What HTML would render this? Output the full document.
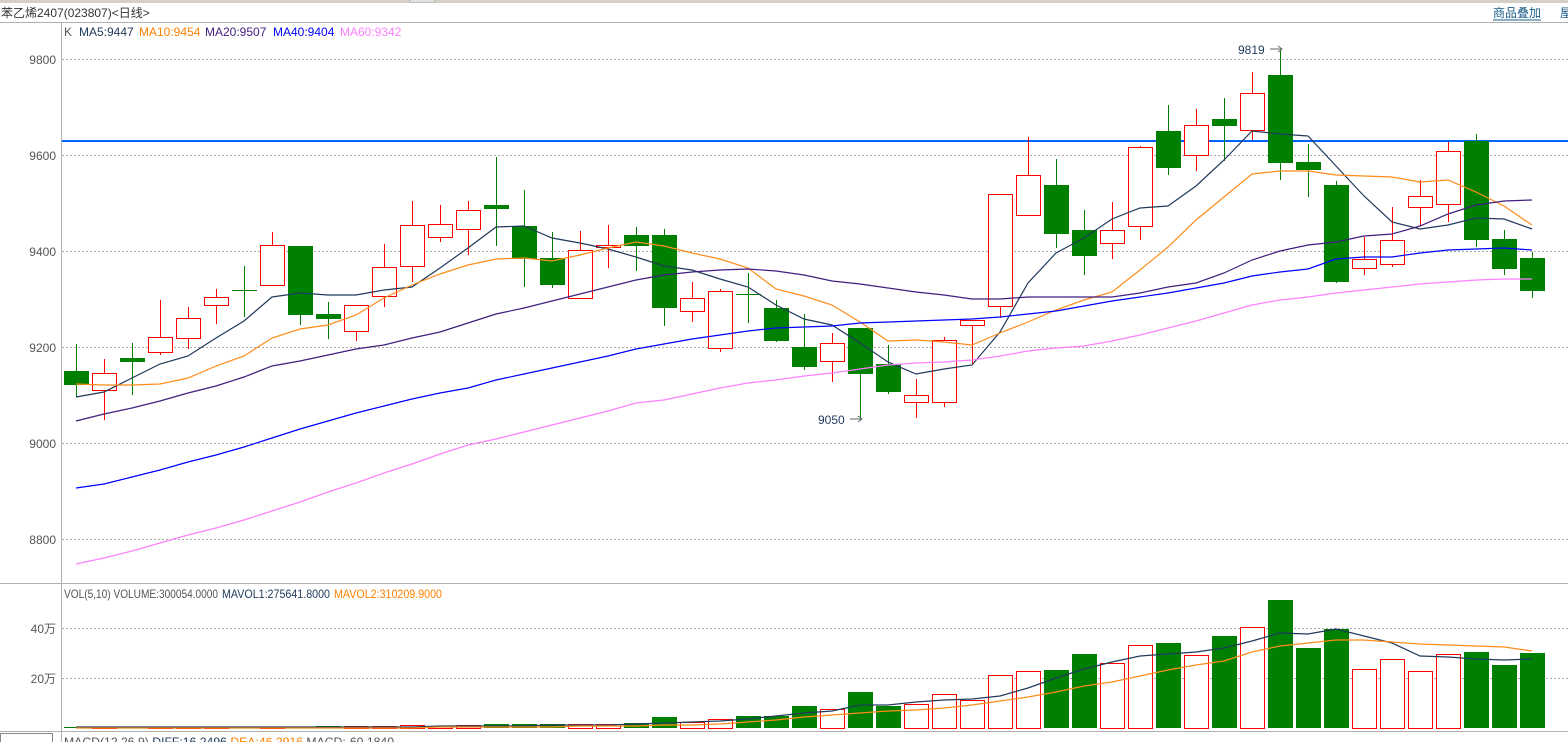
<!DOCTYPE html>
<html><head><meta charset="utf-8"><style>
body{margin:0;width:1568px;height:742px;overflow:hidden;background:#fff;font-family:"Liberation Sans","Noto Sans CJK SC",sans-serif;}
svg{position:absolute;left:0;top:0}
text{font-family:"Liberation Sans","Noto Sans CJK SC",sans-serif;font-size:12px}
</style></head><body>
<svg id="s" width="1568" height="742" xmlns="http://www.w3.org/2000/svg">
<rect x="0" y="0" width="1568" height="3" fill="#d4d0c8"/>
<rect x="410" y="0" width="25" height="2" fill="#fff" stroke="#888" stroke-width="0.5"/>
<text x="1" y="17" fill="#333" font-size="13">苯乙烯2407(023807)&lt;日线&gt;</text>
<text x="1493" y="17" fill="#1a5c8a" font-size="13">商品叠加</text>
<line x1="1493" y1="20" x2="1541" y2="20" stroke="#1a5c8a"/>
<text x="1560" y="17" fill="#1a5c8a" font-size="13">屋</text>
<line x1="0" y1="22.5" x2="1568" y2="22.5" stroke="#b0b0b0"/>
<line x1="61.5" y1="22" x2="61.5" y2="742" stroke="#b0b0b0"/>
<line x1="0" y1="583.5" x2="1568" y2="583.5" stroke="#b0b0b0"/>
<line x1="0" y1="731.5" x2="1568" y2="731.5" stroke="#b0b0b0"/>
<rect x="0.5" y="733.5" width="52" height="10" fill="none" stroke="#888"/>
<text x="64" y="36" fill="#555">K</text>
<text x="79" y="36" fill="#1f3a5a">MA5:9447</text>
<text x="139" y="36" fill="#ff8000">MA10:9454</text>
<text x="205" y="36" fill="#3f1e7f">MA20:9507</text>
<text x="273" y="36" fill="#0000ff">MA40:9404</text>
<text x="340" y="36" fill="#ff80ff">MA60:9342</text>
<text x="64" y="598" fill="#555" textLength="154" lengthAdjust="spacingAndGlyphs">VOL(5,10) VOLUME:300054.0000</text>
<text x="222" y="598" fill="#1f3a5a" textLength="108" lengthAdjust="spacingAndGlyphs">MAVOL1:275641.8000</text>
<text x="334" y="598" fill="#ff8000" textLength="108" lengthAdjust="spacingAndGlyphs">MAVOL2:310209.9000</text>
<text x="64" y="746" fill="#555" textLength="330" lengthAdjust="spacingAndGlyphs">MACD(12,26,9) <tspan fill="#1f3a5a">DIFF:16.2496</tspan> <tspan fill="#ff8000">DEA:46.2916</tspan> MACD:-60.1840</text>
<g fill="#555" text-anchor="end">
<text x="56" y="64">9800</text><text x="56" y="160">9600</text><text x="56" y="256">9400</text>
<text x="56" y="352">9200</text><text x="56" y="448">9000</text><text x="56" y="544">8800</text>
<text x="56" y="633">40万</text><text x="56" y="683">20万</text>
</g>
<g id="g"></g>
<text x="1238" y="54" fill="#1f3a5a">9819</text>
<text x="818" y="424" fill="#1f3a5a">9050</text>
<path d="M1270 49h12M1278 46l4 3-4 3M850 419h12M858 416l4 3-4 3" stroke="#666" fill="none"/>
</svg>
<script>
var g=document.getElementById('g'),h='';
[59,155,251,347,443,539,628,678].forEach(function(y){h+='<line x1="62" y1="'+(y+.5)+'" x2="1568" y2="'+(y+.5)+'" stroke="#aaa" stroke-dasharray="2,2"/>';});
h+='<line x1="62" y1="141" x2="1568" y2="141" stroke="#0066ff" stroke-width="2"/>';
var C=[['g',344,371,385,397],['r',359,373,390,420],['g',343,358,362,395],['r',300,337,352,355],['r',307,318,338,349],['r',289,297,305,324],['g',266,290,291,317],['r',232,245,285,285],['g',246,246,315,325],['g',302,314,319,339],['r',305,305,331,341],['r',244,267,296,307],['r',201,225,266,282],['r',205,224,237,242],['r',201,210,229,255],['g',157,205,209,246],['g',190,226,259,287],['g',232,258,285,288],['r',231,250,298,298],['r',225,245,247,268],['g',227,235,246,271],['g',229,235,308,326],['r',282,298,311,322],['r',289,291,348,352],['g',273,294,295,323],['g',300,308,341,342],['g',314,347,367,370],['r',333,343,361,382],['g',328,328,374,420],['g',345,364,392,394],['r',379,395,402,418],['r',337,340,402,407],['r',320,320,325,364],['r',194,194,306,318],['r',137,175,215,215],['g',159,185,234,248],['g',210,230,256,275],['r',202,230,243,259],['r',146,147,226,240],['g',105,131,168,175],['r',109,125,155,171],['g',98,119,126,161],['r',72,93,130,140],['g',50,75,163,180],['g',144,162,170,197],['g',181,185,282,283],['r',237,259,268,275],['r',207,240,264,267],['r',180,196,207,226],['r',142,151,204,222],['g',134,141,240,247],['g',230,239,269,275],['g',252,258,291,298]];
var V=[727,727,727,727,727,727,727,727,727,726,726,726,725,726,725,724,724,724,724,724,723,717,722,719,716,716,706,709,692,706,704,694,700,675,671,670,654,663,645,643,655,636,627,600,648,629,669,659,671,654,652,665,653];
C.forEach(function(c,i){var x=76+28*i,col=c[0]=='g'?'#008000':'#ff0000';
h+='<line x1="'+(x+.5)+'" y1="'+c[1]+'" x2="'+(x+.5)+'" y2="'+c[4]+'" stroke="'+col+'"/>';
var bh=Math.max(c[3]-c[2],1);
if(c[0]=='g')h+='<rect x="'+(x-12)+'" y="'+c[2]+'" width="25" height="'+bh+'" fill="#008000"/>';
else h+='<rect x="'+(x-11.5)+'" y="'+(c[2]+.5)+'" width="24" height="'+bh+'" fill="#fff" stroke="#ff0000"/>';
var vt=V[i],vh=728-vt;
if(c[0]=='g')h+='<rect x="'+(x-12)+'" y="'+vt+'" width="25" height="'+Math.max(vh,1)+'" fill="#008000"/>';
else h+='<rect x="'+(x-11.5)+'" y="'+(vt+.5)+'" width="24" height="'+Math.max(vh,1)+'" fill="#fff" stroke="#ff0000"/>';
});
function L(a,col,x0){var p=a.map(function(y,i){return (x0+28*i)+','+y}).join(' ');h+='<polyline points="'+p+'" fill="none" stroke="'+col+'" stroke-width="1.2"/>';}
L([397,392,378,364,356,338,321,297,293,295,295,290,287,268,248,227,226,238,243,249,257,266,270,279,287,305,319,325,343,362,374,369,365,332,283,253,238,219,208,206,186,160,131,134,136,166,196,222,229,225,218,219,229],'#1f3a5a',76);
L([384,385,385,384,378,366,356,338,329,325,315,298,285,274,265,259,258,261,255,248,242,246,253,259,268,289,296,305,322,341,340,342,345,333,322,310,300,292,270,247,220,197,174,171,171,175,176,177,182,180,192,206,225],'#ff8c1a',76);
L([421,414,408,401,393,386,377,366,361,355,349,345,338,332,323,314,308,301,294,287,280,275,272,270,269,271,275,281,284,288,292,295,299,299,297,297,297,297,293,287,283,273,260,251,245,242,236,234,226,214,205,201,200],'#3f1e7f',76);
L([488,484,477,470,462,455,447,438,429,421,413,406,399,393,388,380,374,368,362,356,349,344,339,335,331,328,327,326,323,322,321,320,319,317,314,311,306,301,297,293,288,283,276,272,269,259,257,257,253,250,249,248,250],'#0000ff',76);
L([564,558,551,543,535,528,520,511,502,492,483,473,464,454,445,439,432,425,418,411,403,400,394,388,383,380,376,373,369,365,363,362,360,356,351,348,346,341,335,328,321,313,305,300,297,293,290,287,284,282,280,279,279],'#ff80ff',76);
L([727,727,727,727,727,727,727,727,727,727,727,727,727,726,726,726,726,725,725,725,724,723,722,721,719,716,713,711,705,705,702,700,699,696,688,678,669,662,656,654,652,648,641,633,634,629,636,643,656,657,659,660,659],'#1f3a5a',76);
L([728,728,728,728,728,728,728,728,728,728,728,728,728,727,727,727,727,727,726,726,726,725,725,724,722,720,717,715,713,711,710,708,705,701,697,692,686,682,676,670,665,661,652,646,643,640,640,642,644,645,646,647,651],'#ff8c1a',76);
g.innerHTML=h;
</script>
</body></html>
